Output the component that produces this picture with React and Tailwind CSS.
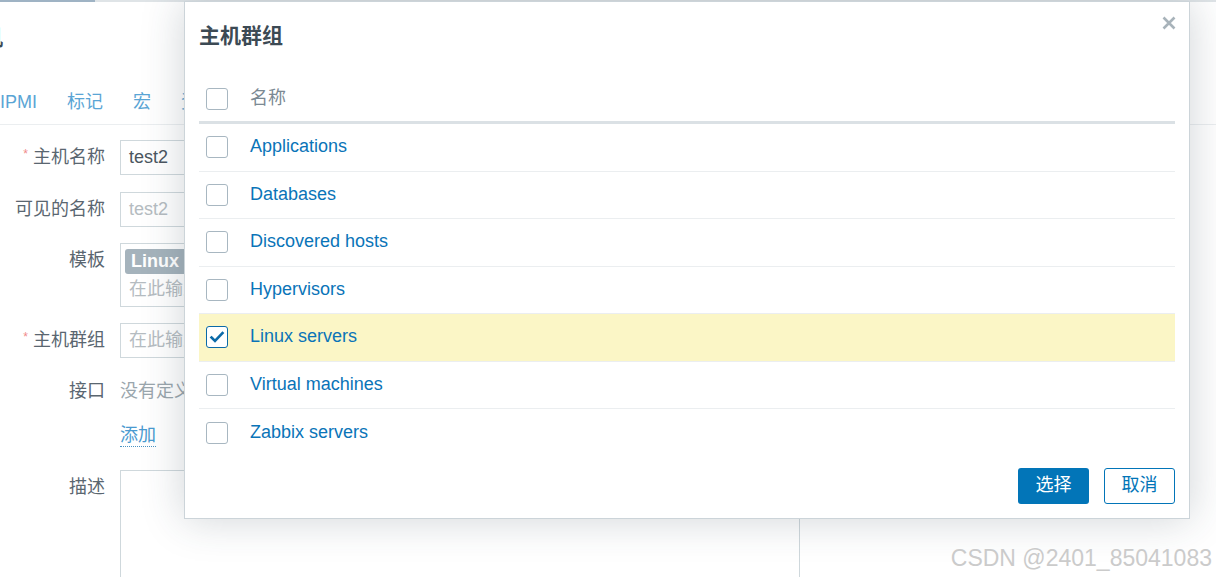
const groups = [
  { name: 'Applications' },
  { name: 'Databases' },
  { name: 'Discovered hosts' },
  { name: 'Hypervisors' },
  { name: 'Linux servers', checked: true },
  { name: 'Virtual machines' },
  { name: 'Zabbix servers' },
]

const font = { fontFamily: '"Liberation Sans", Arial, "Noto Sans CJK SC", sans-serif' }

const Checkbox = ({ checked = false }) => (
  <span
    className={`flex h-[22px] w-[22px] items-center justify-center rounded-[3px] border bg-white ${checked ? 'border-[#0b6aa8]' : 'border-[#a8b7c1]'}`}
  >
    {checked ? (
      <svg viewBox="0 0 16 16" className="h-[16px] w-[16px]" aria-hidden>
        <path d="M2.5 8.5 L6 12 L13.5 4" fill="none" stroke="#0b6aa8" strokeWidth="2.6" strokeLinecap="square" />
      </svg>
    ) : null}
  </span>
)

const FormRow = ({ label, required, children, className = '' }) => (
  <div className={`flex ${className}`}>
    <div className="flex w-[105px] shrink-0 justify-end pt-[5px] text-[18px] leading-[24px] text-[#5a6670]">
      {required ? <span className="mr-[5px] text-[12px] leading-[18px] text-[#f08a8a]">*</span> : null}
      {label}
    </div>
    <div className="ml-[15px] flex-1">{children}</div>
  </div>
)

const BackgroundForm = () => (
  <div className="text-[18px]">
    <div className="flex h-[2px]">
      <div className="w-[95px] bg-[#9fb3c4]" />
      <div className="flex-1 bg-[#dfe4e7]" />
    </div>
    <div className="h-[72px] overflow-hidden pt-[22px]">
      <span className="-ml-[19px] text-[22px] font-bold leading-[28px] text-[#3d4a54]">机</span>
    </div>
    <div className="flex h-[51px] gap-[30px] border-b border-[#ebeef0] pt-[16px] text-[18px] leading-[24px] text-[#5aa5d5]">
      <span>IPMI</span>
      <span>标记</span>
      <span>宏</span>
      <span>资产记录</span>
    </div>
    <div className="mt-[15px] flex flex-col">
      <FormRow label="主机名称" required>
        <div className="flex h-[35px] w-[400px] items-center border border-[#cfd8dc] px-[8px] text-[#4b5660]">test2</div>
      </FormRow>
      <FormRow label="可见的名称" className="mt-[17px]">
        <div className="flex h-[35px] w-[400px] items-center border border-[#cfd8dc] px-[8px] text-[#b5bcc1]">test2</div>
      </FormRow>
      <FormRow label="模板" className="mt-[16px]">
        <div className="h-[64px] w-[400px] border border-[#cfd8dc] px-[4px] pt-[4px]">
          <span className="inline-block rounded-[3px] bg-[#a5b3bc] px-[6px] text-[18px] font-bold leading-[25px] text-white">
            Linux by Zabbix agent
          </span>
          <div className="px-[4px] pt-[2px] leading-[24px] text-[#b5bcc1]">在此输入搜索</div>
        </div>
      </FormRow>
      <FormRow label="主机群组" required className="mt-[16px]">
        <div className="flex h-[35px] w-[400px] items-center border border-[#cfd8dc] px-[8px] text-[#b5bcc1]">在此输入搜索</div>
      </FormRow>
      <FormRow label="接口" className="mt-[16px]">
        <div className="pt-[5px] leading-[24px] text-[#9aa6ad]">没有定义接口。</div>
        <div className="mt-[21px] inline-block border-b border-dotted border-[#4a94c4] leading-[22px] text-[#4a9ad0]">添加</div>
      </FormRow>
      <FormRow label="描述" className="mt-[21px]">
        <div className="h-[120px] w-[680px] border border-[#cfd8dc]" />
      </FormRow>
    </div>
  </div>
)

const Modal = () => (
  <div className="absolute left-[184px] top-[1px] w-[1006px] border border-[#ccd4d9] bg-white px-[14px] pb-[14px] pt-[20px] shadow-[0_0_40px_rgba(40,60,75,0.22)]">
    <h2 className="text-[21px] font-bold leading-[28px] text-[#3c4a54]">主机群组</h2>
    <button className="absolute right-[11px] top-[12px] flex h-[18px] w-[18px] items-center justify-center" aria-label="close">
      <svg viewBox="0 0 14 14" className="h-[14px] w-[14px]" aria-hidden>
        <path d="M1.5 1.5 L12.5 12.5 M12.5 1.5 L1.5 12.5" stroke="#a8b3ba" strokeWidth="2.6" />
      </svg>
    </button>

    <div className="mt-[26px]">
      <div className="flex h-[48px] items-center border-b-[3px] border-[#dbe1e5]">
        <div className="w-[51px] pl-[7px]">
          <Checkbox />
        </div>
        <span className="text-[18px] text-[#7b8993]">名称</span>
      </div>
      {groups.map((g, i) => (
        <div
          key={g.name}
          className={`flex h-[47.5px] items-center ${i < groups.length - 1 ? 'border-b border-[#ebeef0]' : ''} ${g.checked ? 'bg-[#fbf6c6]' : ''}`}
        >
          <div className="w-[51px] pl-[7px]">
            <Checkbox checked={g.checked} />
          </div>
          <span className="pb-[1px] text-[18px] text-[#0a74b8]">{g.name}</span>
        </div>
      ))}
    </div>

    <div className="mt-[11px] flex justify-end gap-[15px]">
      <button className="h-[36px] w-[71px] rounded-[3px] bg-[#0275b8] text-[18px] text-white">选择</button>
      <button className="h-[36px] w-[71px] rounded-[3px] border border-[#0275b8] bg-white text-[18px] text-[#0275b8]">取消</button>
    </div>
  </div>
)

export default function App() {
  return (
    <div className="relative h-[577px] w-[1216px] overflow-hidden bg-white" style={font}>
      <BackgroundForm />
      <Modal />
      <div className="absolute bottom-[5px] right-[4px] text-[23px] leading-[28px] text-[#cbcbcb] [text-shadow:0_0_2px_#fff]">
        CSDN @2401_85041083
      </div>
    </div>
  )
}
